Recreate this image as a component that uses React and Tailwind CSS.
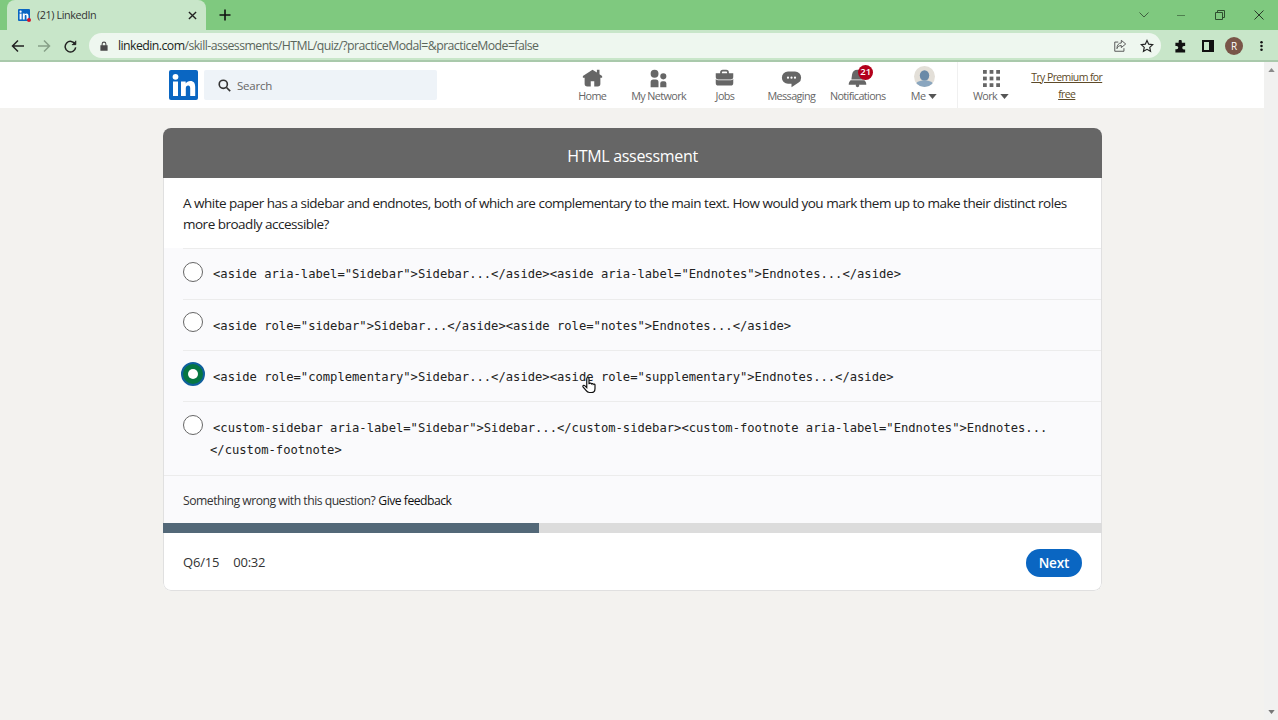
import React from "react";

const sans = "font-['Open_Sans','Noto_Sans',sans-serif]";
const mono = "font-['DejaVu_Sans_Mono','Liberation_Mono',monospace]";

function Glyph({ d, className = "" }) {
  return (
    <svg viewBox="0 0 24 24" className={className} fill="currentColor">
      <path d={d} />
    </svg>
  );
}

function InLogo({ className = "" }) {
  return (
    <svg viewBox="0 0 29 30" className={className}>
      <rect width="29" height="30" rx="2" fill="#0a66c2" />
      <rect x="4" y="11.5" width="5" height="14.5" fill="#fff" />
      <circle cx="6.5" cy="6.8" r="2.9" fill="#fff" />
      <path d="M12 11.5h4.7v2.1c.9-1.5 2.5-2.5 4.6-2.5 3.6 0 4.9 2.3 4.9 6V26h-5v-7.7c0-1.9-.6-2.9-2-2.9-1.6 0-2.4 1.1-2.4 3V26H12z" fill="#fff" />
    </svg>
  );
}

function NavItem({ icon, label, caret, last }) {
  return (
    <div className={`relative w-[66.4px] h-full flex flex-col items-center pt-[6px] ${last ? "border-l border-[#f0f0f0]" : ""}`}>
      <div className="h-[21px] flex items-center justify-center">{icon}</div>
      <div className="-mt-[2px] h-[18px] flex items-center gap-[3px] text-[10.8px] leading-[18px] tracking-[-0.6px] text-[#666] whitespace-nowrap">
        {label}
        {caret && (
          <svg viewBox="0 0 10 6" className="w-[9px] h-[5px]" fill="#555">
            <path d="M0 0h10L5 6z" />
          </svg>
        )}
      </div>
    </div>
  );
}

function Radio({ on }) {
  if (on) {
    return (
      <div className="w-[24px] h-[24px] -ml-[2px] -mr-[2px] -mt-[2px] shrink-0 rounded-full bg-[#057642] border-2 border-[#0f5f9c] flex items-center justify-center">
        <div className="w-[10px] h-[10px] rounded-full bg-white" />
      </div>
    );
  }
  return <div className="w-[20px] h-[20px] shrink-0 rounded-full border border-[#666] bg-white" />;
}

function Option({ on, children, h, top, textTop }) {
  return (
    <div className={`pl-[19px] ${h}`}>
      <div className={`h-full border-t border-[#ececec] flex ${top}`}>
        <Radio on={on} />
        <div className={`ml-[7px] indent-[3px] ${textTop} ${mono} text-[12.16px] leading-[22px] text-[#222] whitespace-nowrap`}>
          {children}
        </div>
      </div>
    </div>
  );
}

export default function App() {
  return (
    <div className={`w-[1278px] h-screen overflow-hidden flex flex-col bg-[#f3f2ef] ${sans}`}>
      {/* tab strip */}
      <div className="h-[30px] shrink-0 bg-[#7fc97f] flex items-stretch">
        <div className="ml-[7px] w-[199px] rounded-t-[8px] bg-[#c8e6c9] flex items-center pl-[11px] pr-[8px]">
          <div className="relative w-[12px] h-[12px]">
            <svg viewBox="0 0 12 12" className="w-[12px] h-[12px]">
              <rect width="12" height="12" rx="1" fill="#0a66c2" />
              <rect x="1.6" y="4.6" width="2" height="5.8" fill="#fff" />
              <circle cx="2.6" cy="2.7" r="1.1" fill="#fff" />
              <path d="M4.8 4.6h1.9v.9c.4-.6 1-1 1.8-1 1.4 0 2 .9 2 2.4v3.5h-2V7.2c0-.8-.3-1.1-.8-1.1-.7 0-1 .4-1 1.2v3.1h-1.9z" fill="#fff" />
            </svg>
            <div className="absolute -right-[1px] -bottom-[1px] w-[4px] h-[4px] rounded-full bg-[#d3132b]" />
          </div>
          <div className="ml-[7px] text-[10.8px] tracking-[-0.4px] text-[#333] whitespace-nowrap">(21) LinkedIn</div>
          <svg viewBox="0 0 10 10" className="ml-auto mr-[1px] w-[9px] h-[9px]" stroke="#222" strokeWidth="1.5" fill="none">
            <path d="M1 1l8 8M9 1l-8 8" />
          </svg>
        </div>
        <div className="ml-[13px] flex items-center">
          <svg viewBox="0 0 12 12" className="w-[12px] h-[12px]" stroke="#111" strokeWidth="1.6" fill="none">
            <path d="M6 .5v11M.5 6h11" />
          </svg>
        </div>
        <div className="ml-auto flex items-center text-[#4a5d4a]">
          <svg viewBox="0 0 10 6" className="w-[10px] h-[6px]" stroke="#3f5f3f" strokeWidth="1" fill="none">
            <path d="M.5.5L5 5 9.500.5" />
          </svg>
          <div className="w-[8px] h-px bg-[#4f7f4f] ml-[28px]" />
          <svg viewBox="0 0 10 10" className="ml-[30px] w-[10px] h-[10px]" stroke="#2f4f2f" strokeWidth="1" fill="none">
            <path d="M.5 2.500h7v7h-7zM2.500 2.500v-2h7v7h-2" />
          </svg>
          <svg viewBox="0 0 10 10" className="ml-[29px] mr-[14px] w-[10px] h-[10px]" stroke="#2a3a2a" strokeWidth="1" fill="none">
            <path d="M.5.5l9 9M9.500.5l-9 9" />
          </svg>
        </div>
      </div>

      {/* toolbar */}
      <div className="h-[32px] shrink-0 bg-[#c8e6c9] border-b-2 border-[#a9c9ab] pt-[2px] flex items-center">
        <svg viewBox="0 0 14 14" className="ml-[11px] w-[14px] h-[14px]" stroke="#222" strokeWidth="1.5" fill="none">
          <path d="M13 7H1.500M7 1.500L1.500 7 7 12.500" />
        </svg>
        <svg viewBox="0 0 14 14" className="ml-[12px] w-[14px] h-[14px]" stroke="#87a088" strokeWidth="1.5" fill="none">
          <path d="M1 7h11.500M7 1.500L12.500 7 7 12.500" />
        </svg>
        <svg viewBox="0 0 14 14" className="ml-[13px] w-[13px] h-[13px]" stroke="#222" strokeWidth="1.6" fill="none">
          <path d="M12 4.500A5.700 5.700 0 1012.600 8" />
          <path d="M12.700 .8v4.200H8.500" fill="#222" strokeWidth="1" />
        </svg>
        <div className="ml-[12px] w-[1072px] h-[25px] -mt-[1px] rounded-full bg-[#eef7ef] flex items-center pl-[11px]">
          <svg viewBox="0 0 10 12" className="w-[8px] h-[10px]" fill="#4a4a4a">
            <path d="M2 5V3.500a3 3 0 016 0V5h1.500v7H.5V5zm1.300 0h3.400V3.500a1.700 1.700 0 00-3.400 0z" />
          </svg>
          <div className="ml-[10px] pt-[2px] text-[12.3px] tracking-[-0.56px] whitespace-nowrap text-[#5b665c]">
            <span className="text-[#1c261d]">linkedin.com</span>/skill-assessments/HTML/quiz/?practiceModal=&amp;practiceMode=false
          </div>
          <svg viewBox="0 0 16 16" className="ml-auto w-[14px] h-[14px]" stroke="#555" strokeWidth="1.1" fill="none">
            <path d="M6 3.500H2v10.500h10.500v-3.500" />
            <path d="M9.500 1.500l5 4.200-5 4.100V7.500C7 7.500 5.500 8.500 4.500 11c0-4 2-6.500 5-6.500z" />
          </svg>
          <svg viewBox="0 0 24 24" className="ml-[13px] mr-[7px] w-[14px] h-[14px]" stroke="#222" strokeWidth="2" fill="none">
            <path d="M12 2.500l2.900 6.300 6.900.8-5.100 4.700 1.400 6.800L12 17.700l-6.100 3.400 1.400-6.800L2.200 9.600l6.900-.8z" />
          </svg>
        </div>
        <svg viewBox="0 0 14 14" className="ml-[13px] w-[13px] h-[13px]" fill="#111">
          <path d="M5 1.500a1.700 1.700 0 013.400 0V3H12v3.500h-1.300a1.800 1.800 0 000 3.600H12V13.500H1.500V10h1.300a1.800 1.800 0 000-3.600H1.500V3H5z" />
        </svg>
        <div className="ml-[15px] w-[12px] h-[12px] border-2 border-[#111] border-l-[5px] box-border rotate-180" />
        <div className="ml-[11px] w-[18px] h-[18px] rounded-full bg-[#795548] flex items-center justify-center text-[10px] text-white">R</div>
        <svg viewBox="0 0 4 14" className="ml-[17px] w-[3px] h-[12px]" fill="#111">
          <circle cx="2" cy="2" r="1.700" />
          <circle cx="2" cy="7" r="1.700" />
          <circle cx="2" cy="12" r="1.700" />
        </svg>
      </div>

      {/* page + scrollbar */}
      <div className="flex-1 min-h-0 flex">
        <div className="flex-1 min-w-0">
          {/* LinkedIn header */}
          <header className="h-[46px] bg-white flex items-center pl-[169px]">
            <InLogo className="w-[29px] h-[30px] shrink-0" />
            <div className="ml-[6px] w-[233px] h-[30px] rounded-[2px] bg-[#eef3f8] flex items-center pl-[14px] shrink-0">
              <svg viewBox="0 0 16 16" className="w-[13px] h-[13px]" stroke="#333" strokeWidth="2" fill="none">
                <circle cx="6.500" cy="6.500" r="5" />
                <path d="M10.500 10.500L15 15" />
              </svg>
              <span className="ml-[6px] pt-[1px] text-[11.5px] tracking-[-0.2px] text-[#666]">Search</span>
            </div>
            <nav className="ml-[122px] h-full flex">
              <NavItem label="Home" icon={<Glyph className="w-[21px] h-[21px] text-[#666]" d="M23 9v2h-2v7a3 3 0 01-3 3h-4v-6h-4v6H6a3 3 0 01-3-3v-7H1V9l11-7 5 3.180V2h3v5.090z" />} />
              <NavItem label="My Network" icon={<Glyph className="w-[21px] h-[21px] text-[#666]" d="M12 16v6H3v-6a3 3 0 013-3h3a3 3 0 013 3zm5.500-3A3.500 3.500 0 1014 9.500a3.500 3.500 0 003.500 3.500zm1 2h-2a2.500 2.500 0 00-2.500 2.500V22h7v-4.500a2.500 2.500 0 00-2.500-2.500zM7.500 2A4.500 4.500 0 1012 6.500 4.490 4.490 0 007.500 2z" />} />
              <NavItem label="Jobs" icon={<Glyph className="w-[21px] h-[21px] text-[#666]" d="M17 6V5a3 3 0 00-3-3h-4a3 3 0 00-3 3v1H2v4a3 3 0 003 3h14a3 3 0 003-3V6zM9 5a1 1 0 011-1h4a1 1 0 011 1v1H9zm10 9a4 4 0 003-1.380V17a3 3 0 01-3 3H5a3 3 0 01-3-3v-4.380A4 4 0 005 14z" />} />
              <NavItem label="Messaging" icon={<Glyph className="w-[21px] h-[21px] text-[#666]" d="M16 4H8a7 7 0 000 14h4v4l8.160-5.390A6.780 6.780 0 0023 11a7 7 0 00-7-7zm-8 8.250A1.250 1.250 0 119.250 11 1.250 1.250 0 018 12.250zm4 0A1.250 1.250 0 1113.250 11 1.250 1.250 0 0112 12.250zm4 0A1.250 1.250 0 1117.250 11 1.250 1.250 0 0116 12.250z" />} />
              <NavItem
                label="Notifications"
                icon={
                  <div className="relative">
                    <Glyph className="w-[21px] h-[21px] text-[#666]" d="M22 19h-8.280a2 2 0 11-3.440 0H2v-1a4.520 4.520 0 011.170-2.830l1-1.170h15.700l1 1.170A4.420 4.420 0 0122 18zM18.210 7.440A6.270 6.270 0 0012 2a6.270 6.270 0 00-6.210 5.440L5 13h14z" />
                    <div className="absolute -top-[3px] left-[11px] w-[15px] h-[15px] rounded-full bg-[#b3001b] text-white text-[9.5px] font-semibold flex items-center justify-center">21</div>
                  </div>
                }
              />
              <NavItem
                label="Me"
                caret
                icon={
                  <svg viewBox="0 0 20 20" className="w-[21px] h-[21px] -mt-[4px]">
                    <defs>
                      <clipPath id="av"><circle cx="10" cy="10" r="10" /></clipPath>
                    </defs>
                    <circle cx="10" cy="10" r="10" fill="#e3dfd8" />
                    <g clipPath="url(#av)">
                      <ellipse cx="10" cy="9" rx="4.500" ry="5" fill="#6a8aa8" />
                      <ellipse cx="10" cy="19" rx="9" ry="5.500" fill="#8aa6bf" />
                    </g>
                  </svg>
                }
              />
              <NavItem
                label="Work"
                caret
                last
                icon={
                  <svg viewBox="0 0 18 18" className="w-[17px] h-[17px]" fill="#666">
                    <rect x="0" y="0" width="4" height="4" /><rect x="7" y="0" width="4" height="4" /><rect x="14" y="0" width="4" height="4" />
                    <rect x="0" y="7" width="4" height="4" /><rect x="7" y="7" width="4" height="4" /><rect x="14" y="7" width="4" height="4" />
                    <rect x="0" y="14" width="4" height="4" /><rect x="7" y="14" width="4" height="4" /><rect x="14" y="14" width="4" height="4" />
                  </svg>
                }
              />
            </nav>
            <div className="w-[86px] pt-[1px] text-center text-[10.5px] leading-[17px] tracking-[-0.6px] text-[#5d4a28] underline">
              Try Premium for free
            </div>
          </header>

          {/* assessment card */}
          <main className="ml-[163px] mt-[20px] w-[939px] rounded-[8px] bg-white overflow-hidden">
            <div className="h-[50px] bg-[#666] flex items-center justify-center pt-[6px] text-[16px] tracking-[-0.3px] text-white">HTML assessment</div>
            <div className="h-[70px] border-x border-[#e0e0e0] px-[19px] pt-[15px] text-[13.5px] leading-[21px] tracking-[-0.5px] text-[#222] whitespace-nowrap">
              A white paper has a sidebar and endnotes, both of which are complementary to the main text. How would you mark them up to make their distinct roles<br />more broadly accessible?
            </div>
            <div className="bg-[#fafafc] border-x border-[#e0e0e0]">
              <Option h="h-[51px]" top="pt-[13px]" textTop="pt-[1px]">{'<aside aria-label="Sidebar">Sidebar...</aside><aside aria-label="Endnotes">Endnotes...</aside>'}</Option>
              <Option h="h-[51px]" top="pt-[12px]" textTop="pt-[3px]">{'<aside role="sidebar">Sidebar...</aside><aside role="notes">Endnotes...</aside>'}</Option>
              <Option h="h-[51px]" top="pt-[13px]" textTop="pt-[2px]" on>{'<aside role="complementary">Sidebar...</aside><aside role="supplementary">Endnotes...</aside>'}</Option>
              <Option h="h-[74px]" top="pt-[13px]" textTop="pt-[2px]">
                {'<custom-sidebar aria-label="Sidebar">Sidebar...</custom-sidebar><custom-footnote aria-label="Endnotes">Endnotes...'}
                <br />
                {'</custom-footnote>'}
              </Option>
              <div className="h-[48px] pt-[3px] border-t border-[#ececec] flex items-center pl-[19px] text-[12.2px] tracking-[-0.5px] text-[#333]">
                Something wrong with this question?<span className="ml-[3px] font-medium text-[#111]">Give feedback</span>
              </div>
            </div>
            <div className="h-[10px] bg-[#dcdcdc]">
              <div className="h-full bg-[#536878]" style={{ width: `${(6 / 15) * 100}%` }} />
            </div>
            <div className="h-[58px] pt-[3px] rounded-b-[8px] border-x border-b border-[#e0e0e0] flex items-center px-[19px] text-[13px] tracking-[-0.2px] text-[#333]">
              <span>Q6/15</span>
              <span className="ml-[14px]">00:32</span>
              <button className="ml-auto w-[56px] h-[28px] rounded-full bg-[#0a66c2] text-white text-[13.5px] font-semibold tracking-[-0.1px]">Next</button>
            </div>
          </main>
        </div>

        {/* scrollbar */}
        <div className="w-[14px] shrink-0 bg-[#f1f1f0] flex flex-col items-center justify-between py-[6px]">
          <svg viewBox="0 0 8 5" className="w-[7px] h-[4px]" fill="#8a8a8a"><path d="M4 0l4 5H0z" /></svg>
          <svg viewBox="0 0 8 5" className="w-[7px] h-[4px]" fill="#777"><path d="M0 0h8L4 5z" /></svg>
        </div>
      </div>

      {/* mouse cursor */}
      <svg viewBox="0 0 24 24" className="absolute left-[580px] top-[376px] w-[18px] h-[18px]" fill="#fff" stroke="#111" strokeWidth="1.600">
        <path d="M9 11V3.500a1.500 1.500 0 013 0V10l1-.2a1.400 1.400 0 012.300.6 1.400 1.400 0 012.300.7 1.400 1.400 0 012.400 1v4.400c0 3-2 5.500-5 5.500h-2.500c-2 0-3.300-1-4.500-2.800L4 14.500c-.8-1.400 1-2.800 2.300-1.600L9 15.500z" />
      </svg>
    </div>
  );
}
